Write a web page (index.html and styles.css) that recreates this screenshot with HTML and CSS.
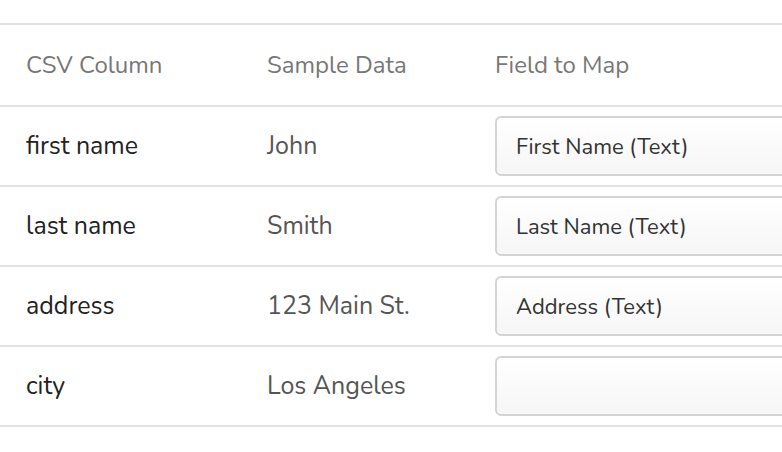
FILE: index.html
```html
<!DOCTYPE html>
<html lang="en">
<head>
    <meta charset="UTF-8">
    <meta name="viewport" content="width=device-width, initial-scale=1.0">
    <title>Map CSV Columns</title>
    <link rel="stylesheet" href="styles.css">
</head>
<body>
    <div class="mapping-wrap">
        <table class="mapping-table">
            <thead>
                <tr>
                    <th class="col-csv">CSV Column</th>
                    <th class="col-sample">Sample Data</th>
                    <th class="col-field">Field to Map</th>
                </tr>
            </thead>
            <tbody>
                <tr>
                    <td class="csv-name">first name</td>
                    <td class="sample">John</td>
                    <td class="field-cell"><div class="field-select">First Name (Text)</div></td>
                </tr>
                <tr>
                    <td class="csv-name">last name</td>
                    <td class="sample">Smith</td>
                    <td class="field-cell"><div class="field-select">Last Name (Text)</div></td>
                </tr>
                <tr>
                    <td class="csv-name">address</td>
                    <td class="sample">123 Main St.</td>
                    <td class="field-cell"><div class="field-select">Address (Text)</div></td>
                </tr>
                <tr>
                    <td class="csv-name">city</td>
                    <td class="sample">Los Angeles</td>
                    <td class="field-cell"><div class="field-select"></div></td>
                </tr>
            </tbody>
        </table>
    </div>
</body>
</html>
```
FILE: styles.css
```css
* {
    margin: 0;
    padding: 0;
    box-sizing: border-box;
}

body {
    font-family: "Nunito", "Open Sans", sans-serif;
    background-color: #fff;
    color: #222;
}

.mapping-wrap {
    padding-top: 23px;
    width: 100%;
    overflow: hidden;
}

.mapping-table {
    border-collapse: collapse;
    table-layout: fixed;
    width: 100%;
    border-top: 2px solid #e2e2e2;
}

.mapping-table th,
.mapping-table td {
    text-align: left;
    vertical-align: middle;
    border-bottom: 2px solid #e2e2e2;
    font-size: 25px;
}

.mapping-table th {
    height: 82px;
    font-size: 24px;
    font-weight: normal;
    color: #777;
}

.mapping-table td {
    height: 80px;
}

.col-csv,
.csv-name {
    width: 267px;
    padding-left: 26px;
}

.col-sample,
.sample {
    width: 228px;
}

.sample {
    color: #555;
}

.field-cell {
    overflow: hidden;
}

.field-select {
    width: 420px;
    height: 60px;
    display: flex;
    align-items: center;
    padding-left: 19px;
    padding-top: 2px;
    border: 2px solid #d4d4d4;
    border-radius: 6px;
    background: linear-gradient(#fff, #f6f6f6);
    font-size: 22px;
    color: #333;
}
```
